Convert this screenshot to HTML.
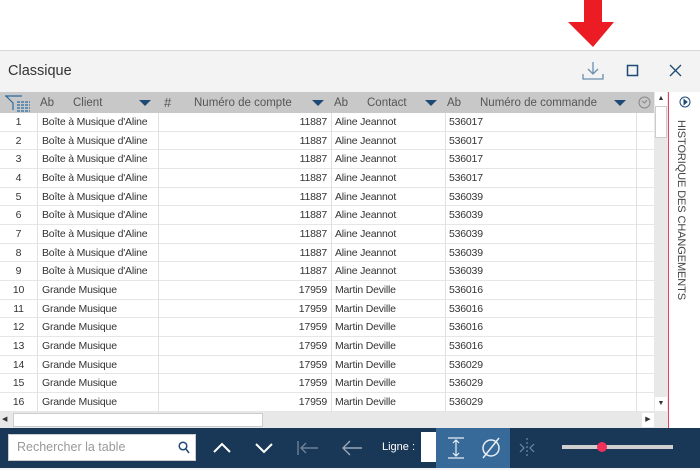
<!DOCTYPE html>
<html><head><meta charset="utf-8"><style>
*{box-sizing:border-box;margin:0;padding:0}
body{width:700px;height:470px;background:#fff;font-family:"Liberation Sans",sans-serif;position:relative;overflow:hidden;font-size:11px;color:#333}
.abs{position:absolute}
.win{left:0;top:50px;width:700px;height:420px;border-top:1px solid #d6d6d6;background:#f3f3f3}
.hdr{left:0;top:92px;width:654px;height:21px;background:#c8c8c8;color:#555;font-size:11.5px}
.hdr span{position:absolute;top:5px}
.tri{position:absolute;top:8px;width:0;height:0;border-left:6px solid transparent;border-right:6px solid transparent;border-top:6px solid #1e4a75}
.row{position:absolute;left:0;width:654px;height:18.67px;background:#fff;border-bottom:1.5px solid #e6e6e6;font-size:10.5px;color:#333;letter-spacing:-0.2px}
.row div{position:absolute;top:3px}
.vl{position:absolute;top:113px;height:299px;width:1px;background:#e0e0e0}
.bar{left:0;top:428px;width:700px;height:40px;background:#193756}
</style></head><body>
<svg class="abs" style="left:566px;top:0" width="50" height="48"><rect x="18" y="0" width="18" height="24" fill="#ec1c24"/><polygon points="2,22 48,22 27,47" fill="#ec1c24"/></svg>
<div class="abs win"></div>
<div class="abs" style="left:8px;top:63px;font-size:14.5px;color:#333">Classique</div>
<svg class="abs" style="left:581px;top:60px" width="24" height="22" fill="none" stroke="#6a8fb0" stroke-width="1.3"><path d="M12 2V14M7 9L12 14L17 9M2 14V19H22V14"/></svg>
<svg class="abs" style="left:626px;top:64px" width="14" height="14" fill="none" stroke="#1e4a75" stroke-width="1.5"><rect x="1.5" y="1.5" width="10" height="10"/></svg>
<svg class="abs" style="left:669px;top:64px" width="14" height="14" fill="none" stroke="#1e4a75" stroke-width="1.3"><path d="M1 1L12 12M12 1L1 12"/></svg>
<div class="abs hdr">
<svg style="position:absolute;left:4px;top:2px" width="28" height="18" fill="none" stroke="#2a6aa0" stroke-width="1.2"><path d="M1 2H18M2 2L9 9V16"/><path d="M13 8H26M13 11H26M13 14H26M13 17H26" stroke-dasharray="3 1"/></svg>
<span style="left:40px">Ab</span><span style="left:73px">Client</span><i class="tri" style="left:139px"></i>
<span style="left:164px;font-size:13px;top:3px">#</span><span style="left:194px">Numéro de compte</span><i class="tri" style="left:312px"></i>
<span style="left:334px">Ab</span><span style="left:367px">Contact</span><i class="tri" style="left:425px"></i>
<span style="left:447px">Ab</span><span style="left:480px">Numéro de commande</span><i class="tri" style="left:614px"></i>
<svg style="position:absolute;left:638px;top:4px" width="13" height="13" fill="none" stroke="#888"><circle cx="6.5" cy="6.5" r="5.5"/><path d="M4 5L6.5 7L9 4"/></svg>
</div>
<div id="rows"></div>
<div class="vl" style="left:37px"></div><div class="vl" style="left:158px"></div><div class="vl" style="left:331px"></div><div class="vl" style="left:445px"></div><div class="vl" style="left:636px"></div>
<div class="abs" style="left:654px;top:92px;width:14px;height:320px;background:#e8e8e8"></div>
<div class="abs" style="left:655px;top:92px;width:12px;height:14px;background:#fff;font-size:7px;text-align:center;line-height:14px">▲</div>
<div class="abs" style="left:655px;top:106px;width:12px;height:32px;background:#fff;border:1px solid #ccc"></div>
<div class="abs" style="left:655px;top:397px;width:12px;height:14px;background:#fff;font-size:7px;text-align:center;line-height:14px">▼</div>
<div class="abs" style="left:0;top:412px;width:668px;height:16px;background:#e8e8e8"></div>
<div class="abs" style="left:2px;top:413px;width:10px;height:14px;font-size:7px;line-height:14px">◀</div>
<div class="abs" style="left:13px;top:413px;width:250px;height:14px;background:#fff;border:1px solid #ccc"></div>
<div class="abs" style="left:642px;top:413px;width:12px;height:14px;background:#fff;font-size:7px;line-height:14px;text-align:center">▶</div>
<div class="abs" style="left:668px;top:92px;width:32px;height:336px;background:#fff;border-left:1.5px solid #e8405f"></div>
<svg class="abs" style="left:679px;top:96px" width="12" height="12" fill="none" stroke="#1e4a75"><circle cx="6" cy="6" r="5"/><path d="M5 3.5L8 6L5 8.5Z" fill="#1e4a75"/></svg>
<div class="abs" style="left:675px;top:120px;writing-mode:vertical-rl;font-size:11px;color:#444;letter-spacing:-0.1px">HISTORIQUE DES CHANGEMENTS</div>
<div class="abs bar"></div>
<div class="abs" style="left:8px;top:434px;width:188px;height:27px;background:#fff;border:1px solid #ccc"></div>
<div class="abs" style="left:17px;top:440px;font-size:12.5px;color:#999">Rechercher la table</div>
<svg class="abs" style="left:178px;top:441px" width="12" height="13" fill="none" stroke="#1e4a75" stroke-width="1.5"><circle cx="5" cy="5" r="3.8"/><path d="M8 8L11 12"/></svg>
<svg class="abs" style="left:210px;top:436px" width="170" height="24" fill="none" stroke="#fff" stroke-width="2"><path d="M4 16L12 8L20 16M46 8L54 16L62 8"/><path d="M88 5V19M108 12H92M96 7L91 12L96 17" stroke="#6d8199" stroke-width="1.4"/><path d="M152 12H134M140 5L133 12L140 19" stroke="#9aa8b8" stroke-width="1.4"/></svg>
<div class="abs" style="left:382px;top:441px;color:#fff;font-size:11px">Ligne :</div>
<div class="abs" style="left:421px;top:432px;width:15px;height:30px;background:#fff"></div>
<div class="abs" style="left:436px;top:428px;width:74px;height:40px;background:#386a99"></div>
<svg class="abs" style="left:436px;top:428px" width="74" height="40" fill="none" stroke="#e6eef6" stroke-width="1.2"><path d="M12 10H28M12 30H28M20 12V28M17 15L20 12L23 15M17 25L20 28L23 25"/><circle cx="55" cy="20" r="8" stroke-width="1.5"/><path d="M47 30L63 10" stroke-width="1.5"/></svg>
<svg class="abs" style="left:516px;top:436px" width="22" height="24" fill="none" stroke="#6d8aa8" stroke-width="1.2"><path d="M11 2V22" stroke-dasharray="2 2"/><path d="M4 8L8 12L4 16M18 8L14 12L18 16"/></svg>
<div class="abs" style="left:562px;top:445px;width:111px;height:4px;background:#cfcfcf"></div>
<div class="abs" style="left:597px;top:442px;width:10px;height:10px;border-radius:50%;background:#f0305a"></div>
<script>
var h='',d=[["Boîte à Musique d'Aline","11887","Aline Jeannot",["536017","536017","536017","536017","536039","536039","536039","536039","536039"]],["Grande Musique","17959","Martin Deville",["536016","536016","536016","536016","536029","536029","536029"]]];
var n=1;d.forEach(function(g){g[3].forEach(function(c){var t=113+(n-1)*18.67;h+='<div class="row" style="top:'+t+'px"><div style="left:0;width:37px;text-align:center">'+n+'</div><div style="left:42px">'+g[0]+'</div><div style="left:158px;width:169px;text-align:right">'+g[1]+'</div><div style="left:335px">'+g[2]+'</div><div style="left:449px">'+c+'</div></div>';n++;});});
document.getElementById('rows').innerHTML=h;
</script>
</body></html>
